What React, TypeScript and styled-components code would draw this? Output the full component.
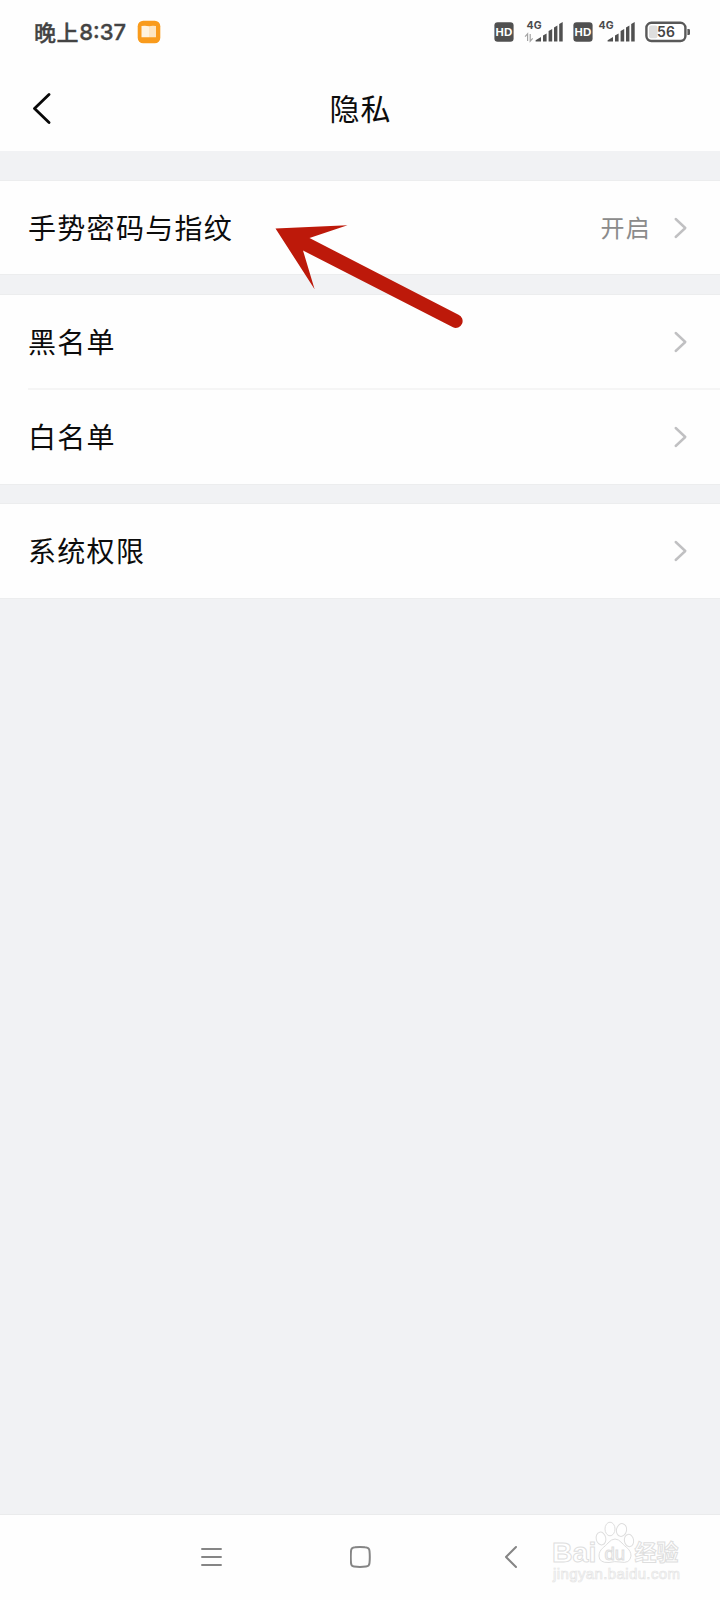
import React from "react";
import styled, { createGlobalStyle } from "styled-components";

const GlobalStyle = createGlobalStyle`
  * { box-sizing: border-box; }
  body { margin: 0; background: #f1f2f4; font-family: "Noto Sans CJK SC", sans-serif; }
`;

const Screen = styled.div`
  position: relative;
  display: flex;
  flex-direction: column;
  width: 720px;
  height: 1600px;
  overflow: hidden;
  background: #f1f2f4;
  color: #0c0c0c;
`;

const StatusBar = styled.header`
  display: flex;
  align-items: center;
  justify-content: space-between;
  height: 64px;
  padding: 0 29px 0 34px;
  background: #fefefe;
`;

const StatusGroup = styled.div`
  display: flex;
  align-items: center;
`;

const Clock = styled.div`
  display: flex;
  align-items: center;
  width: 103px;
  height: 62px;
  color: #434343;
  font-size: 22px;
  font-weight: 500;
  line-height: 60px;
  letter-spacing: 0.6px;
  -webkit-text-stroke: 0.35px #434343;
`;

const Period = styled.span`
  padding-bottom: 2px;
`;

const Digits = styled.span`
  font-family: Inter, sans-serif;
  font-size: 22px;
  font-weight: 500;
  letter-spacing: 0;
  line-height: 64px;
`;

const TitleBar = styled.div`
  display: grid;
  grid-template-columns: 120px 1fr 120px;
  align-items: center;
  height: 87px;
  background: #fefefe;
`;

const BackButton = styled.button`
  display: flex;
  padding: 0 0 0 32px;
  border: 0;
  background: none;
`;

const Title = styled.h1`
  margin: 0;
  padding: 0 0 2px 1px;
  font-size: 30px;
  font-weight: 400;
  line-height: 44px;
  letter-spacing: 1px;
  text-align: center;
`;

const Settings = styled.main`
  display: flex;
  flex: 1;
  flex-direction: column;
  padding-top: 30px;
`;

const Group = styled.section<{ $gap: number }>`
  margin-bottom: ${(p) => p.$gap}px;
  background: #fefefe;
  box-shadow: 0 0 0 1px #ecedee;
`;

const Row = styled.div<{ $height: number; $divided?: boolean }>`
  display: flex;
  align-items: center;
  height: ${(p) => p.$height}px;
  margin-left: 28px;
  padding-right: 33px;
  border-bottom: ${(p) => (p.$divided ? "2px solid #f5f5f5" : "0")};
`;

const Label = styled.span`
  flex: 1;
  padding-bottom: 2px;
  font-size: 28px;
  line-height: 42px;
  letter-spacing: 1.3px;
`;

const Value = styled.span`
  margin-right: 23px;
  padding-bottom: 1px;
  color: #8b8b8b;
  font-size: 24px;
  line-height: 36px;
  letter-spacing: 1.2px;
`;

const NavBar = styled.nav`
  display: flex;
  align-items: center;
  height: 86px;
  padding: 0 0 2px 200px;
  gap: 126.5px;
  border-top: 1px solid #eaebec;
  background: #fefefe;
`;

const Pointer = styled.svg`
  position: absolute;
  top: 215px;
  left: 270px;
`;

const Watermark = styled.svg`
  position: absolute;
  top: 1515px;
  left: 545px;
`;

const Chevron = () => (
  <svg width="13" height="22" viewBox="0 0 13 22" fill="none">
    <path d="M1.7 2 11.3 11 1.7 20" stroke="#c0c0c2" strokeWidth="2.4" strokeLinecap="round" strokeLinejoin="round" />
  </svg>
);

const BookIcon = () => (
  <svg width="24" height="24" viewBox="0 0 24 24">
    <rect x="0.7" y="0.7" width="22.6" height="22.6" rx="5.5" fill="#f99b1c" />
    <path d="M4.5 6Q8.5 5.2 12 6.2V17.2H4.5Z" fill="#fff3df" />
    <path d="M12 6.2Q15.5 5.2 19 6V17.2H12Z" fill="#fde5c1" />
  </svg>
);

const HdIcon = () => (
  <svg width="20" height="20" viewBox="0 0 20 20">
    <rect x="0.4" y="0.3" width="19.2" height="19.4" rx="3.3" fill="#505050" />
    <text x="9.9" y="14.2" textAnchor="middle" fontFamily="Liberation Sans, sans-serif" fontSize="11.5" fontWeight="700" fill="#fff">HD</text>
  </svg>
);

const SignalIcon = ({ data }: { data?: boolean }) => (
  <svg width="40" height="32" viewBox="0 -4 40 32">
    <text x="2.4" y="8.6" fontFamily="Inter, sans-serif" fontSize="10.5" fontWeight="700" letterSpacing="0.3" fill="#4b4b4b">4G</text>
    {data && (
      <path d="M3.6 21v-7.2l-2.5 2.8M6.2 14v7.2l2.5-2.8" fill="none" stroke="#a4a4a4" strokeWidth="1.2" />
    )}
    <path d="M11.6 21.6v-1.3l5.4-3.3v4.6ZM19 15.4l3.6-2v8.2h-3.6ZM24.6 11.1l3.6-2v12.5H24.6ZM30 7.5l3.4-2v16.1h-3.4ZM35.2 4.1l3.5-2v19.5h-3.5Z" fill="#505050" />
  </svg>
);

const BatteryIcon = () => (
  <svg width="46" height="22" viewBox="0 0 46 22">
    <rect x="1.4" y="1.8" width="39" height="18.2" rx="5" fill="#fff" stroke="#595959" strokeWidth="2.4" />
    <rect x="4" y="4.6" width="8.5" height="12.6" rx="2" fill="#dedede" />
    <path d="M42.4 8h1.3q1.3 0 1.3 1.3v3.4q0 1.3-1.3 1.3h-1.3Z" fill="#595959" />
    <text x="21" y="16.1" textAnchor="middle" fontFamily="Inter, sans-serif" fontSize="14" fontWeight="600" fill="#454545">56</text>
  </svg>
);

const IndicatorSlot = styled.span<{ $gap: number }>`
  display: flex;
  margin-right: ${(p) => p.$gap}px;
`;

export default function App() {
  return (
    <Screen>
      <GlobalStyle />
      <StatusBar>
        <StatusGroup>
          <Clock><Period>晚上</Period><Digits>8:37</Digits></Clock>
          <BookIcon />
        </StatusGroup>
        <StatusGroup>
          <IndicatorSlot $gap={10}><HdIcon /></IndicatorSlot>
          <IndicatorSlot $gap={9}><SignalIcon data /></IndicatorSlot>
          <IndicatorSlot $gap={3}><HdIcon /></IndicatorSlot>
          <IndicatorSlot $gap={9}><SignalIcon /></IndicatorSlot>
          <BatteryIcon />
        </StatusGroup>
      </StatusBar>
      <TitleBar>
        <BackButton aria-label="返回">
          <svg width="20" height="32" viewBox="0 0 20 32" fill="none">
            <path d="M17 2.5 2.5 16.5 17 30.5" stroke="#080808" strokeWidth="2.8" strokeLinecap="round" strokeLinejoin="round" />
          </svg>
        </BackButton>
        <Title>隐私</Title>
      </TitleBar>
      <Settings>
        <Group $gap={21}>
          <Row $height={93}><Label>手势密码与指纹</Label><Value>开启</Value><Chevron /></Row>
        </Group>
        <Group $gap={20}>
          <Row $height={95} $divided><Label>黑名单</Label><Chevron /></Row>
          <Row $height={94}><Label>白名单</Label><Chevron /></Row>
        </Group>
        <Group $gap={0}>
          <Row $height={94}><Label>系统权限</Label><Chevron /></Row>
        </Group>
      </Settings>
      <NavBar>
        <svg width="23" height="24" viewBox="0 0 23 24" fill="none">
          <path d="M2 4h19M2 12h19M2 20h19" stroke="#858585" strokeWidth="1.9" strokeLinecap="round" />
        </svg>
        <svg width="23" height="24" viewBox="0.5 0 23 24" fill="none">
          <path d="M5.5 2.3Q10.5 1.5 15.5 2.3Q19.8 2.5 20 6Q20.6 12 20 18Q19.8 21.3 16.5 21.6Q10.5 22.2 4.5 21.6Q1.7 21.3 1.5 18Q1 12 1.5 6Q1.7 2.5 5.5 2.3Z" stroke="#858585" strokeWidth="2" />
        </svg>
        <svg width="23" height="24" viewBox="0 0 23 24" fill="none">
          <path d="M17 2 7 12 17 22" stroke="#858585" strokeWidth="2" strokeLinecap="round" strokeLinejoin="round" />
        </svg>
      </NavBar>
      <Pointer width="200" height="120" viewBox="270 215 200 120">
        <path d="M275.5 228.5 347.5 225.2 309.5 238 458.5 314.7A6.7 6.7 0 0 1 453 327.3L303 250.5 314.6 289.2Z" fill="#bd190a" />
      </Pointer>
      <Watermark width="145" height="75" viewBox="545 1515 145 75">
        <g fill="#fff" stroke="#dedede" strokeWidth="1">
          <text x="552" y="1561.5" fontFamily="Liberation Sans, sans-serif" fontSize="28.5" fontWeight="700">Bai</text>
          <ellipse cx="601" cy="1538.5" rx="4.8" ry="6.5" transform="rotate(-12 601 1538.5)" />
          <ellipse cx="610" cy="1529" rx="5" ry="6.8" />
          <ellipse cx="621.5" cy="1530" rx="5" ry="6.5" transform="rotate(12 621.5 1530)" />
          <ellipse cx="629" cy="1540.5" rx="4.6" ry="6.2" transform="rotate(-10 629 1540.5)" />
          <path d="M608 1543Q615 1535 622 1543C625 1547 631 1549 631 1556Q630 1564 620 1562Q615 1561 609 1562.5Q599 1563 599 1556C599 1549 605 1547 608 1543Z" />
          <text x="604.5" y="1559.5" fontFamily="Liberation Sans, sans-serif" fontSize="18.5">du</text>
          <text x="634.5" y="1560" fontFamily="Noto Sans CJK SC, sans-serif" fontSize="22" fontWeight="700">经验</text>
        </g>
        <text x="553" y="1579" fontFamily="Liberation Sans, sans-serif" fontSize="15" textLength="127" fill="#fff" stroke="#e4e4e4" strokeWidth="0.7">jingyan.baidu.com</text>
      </Watermark>
    </Screen>
  );
}
